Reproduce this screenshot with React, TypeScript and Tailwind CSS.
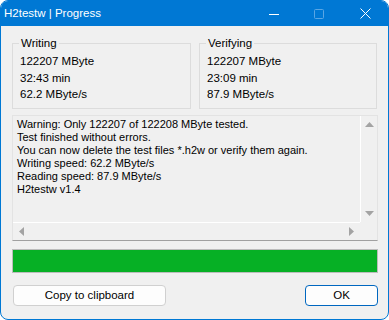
import React from 'react';

const font = { fontFamily: '"Segoe UI", "Liberation Sans", Arial, sans-serif' };

function GroupBox({ title, lines, className }: { title: string; lines: string[]; className: string }) {
  return (
    <div className={`h-[66px] border border-[#dcdcdc] ${className}`}>
      <div className="-mt-[10px] ml-[6px] w-fit bg-[#f0f0f0] px-[2px] text-[11.5px] leading-[18px]">{title}</div>
      <div className="pl-[7px] pt-[1px]">
        {lines.map((l) => (
          <div key={l} className="h-[16.5px] text-[11.5px] leading-[16.5px]">{l}</div>
        ))}
      </div>
    </div>
  );
}

export default function App() {
  const log = [
    'Warning: Only 122207 of 122208 MByte tested.',
    'Test finished without errors.',
    'You can now delete the test files *.h2w or verify them again.',
    'Writing speed: 62.2 MByte/s',
    'Reading speed: 87.9 MByte/s',
    'H2testw v1.4',
  ];

  return (
    <div className="h-[320px] w-[389px] bg-white" style={font}>
      <div className="flex h-[320px] w-[389px] flex-col overflow-hidden rounded-[8px] border border-[#0078d4] bg-[#f0f0f0] text-black">
        {/* title bar */}
        <div className="flex h-[25px] shrink-0 items-center bg-[#0078d4] text-white">
          <span className="ml-[3px] text-[11.5px] leading-[25px]">H2testw | Progress</span>
          <div className="ml-auto flex h-full items-center">
            <svg width="10" height="10" viewBox="0 0 10 10" className="mr-[35px]">
              <line x1="0" y1="5.5" x2="10" y2="5.5" stroke="white" strokeWidth="1" />
            </svg>
            <svg width="10" height="10" viewBox="0 0 10 10" className="mr-[36px]">
              <rect x="0.5" y="0.5" width="9" height="9" rx="1" fill="none" stroke="#5aa6e4" strokeWidth="1" />
            </svg>
            <svg width="11" height="11" viewBox="0 0 11 11" className="mr-[17px]">
              <path d="M0.5 0.5 L10.5 10.5 M10.5 0.5 L0.5 10.5" stroke="white" strokeWidth="1" />
            </svg>
          </div>
        </div>

        <div className="flex flex-col pl-[11px] pt-[17px]">
          <div className="flex gap-[8px]">
            <GroupBox title="Writing" lines={['122207 MByte', '32:43 min', '62.2 MByte/s']} className="w-[179px]" />
            <GroupBox title="Verifying" lines={['122207 MByte', '23:09 min', '87.9 MByte/s']} className="w-[178px]" />
          </div>

          {/* log edit box */}
          <div className="mt-[6px] flex h-[126px] w-[366px] flex-col border border-[#e3e3e3] border-b-[#a0a0a0]">
            <div className="flex h-[106px]">
              <div className="flex-1 overflow-hidden whitespace-nowrap pl-[4px] pt-[2px] text-[11px] leading-[13px]">
                {log.map((l) => (
                  <div key={l} className="h-[13px]">{l}</div>
                ))}
              </div>
              <div className="flex w-[17px] flex-col items-center justify-between border-l border-white py-[6px]">
                <svg width="9" height="5" viewBox="0 0 9 5"><path d="M4.5 0 L9 5 L0 5 Z" fill="#a3a3a3" /></svg>
                <svg width="9" height="5" viewBox="0 0 9 5"><path d="M0 0 L9 0 L4.5 5 Z" fill="#a3a3a3" /></svg>
              </div>
            </div>
            <div className="flex h-[18px]">
              <div className="flex flex-1 items-center justify-between border-t border-white px-[6px]">
                <svg width="5" height="9" viewBox="0 0 5 9"><path d="M0 4.5 L5 0 L5 9 Z" fill="#a3a3a3" /></svg>
                <svg width="5" height="9" viewBox="0 0 5 9"><path d="M5 4.5 L0 0 L0 9 Z" fill="#a3a3a3" /></svg>
              </div>
              <div className="w-[17px] bg-[#f0f0f0]" />
            </div>
          </div>

          {/* progress bar */}
          <div className="mt-[8px] h-[24px] w-[366px] border border-[#bcbcbc] bg-[#e6e6e6]">
            <div className="h-full w-full bg-[#06b025]" />
          </div>

          {/* buttons */}
          <div className="mt-[12px] flex w-[366px] items-center">
            <button className="ml-[1px] h-[21px] w-[153px] rounded-[4px] border border-[#d0d0d0] bg-[#fdfdfd] text-[11.5px] leading-[19px]">
              Copy to clipboard
            </button>
            <button className="ml-auto h-[21px] w-[73px] rounded-[4px] border border-[#0067c0] bg-[#fdfdfd] text-[11.5px] leading-[19px]">
              OK
            </button>
          </div>
        </div>
      </div>
    </div>
  );
}
